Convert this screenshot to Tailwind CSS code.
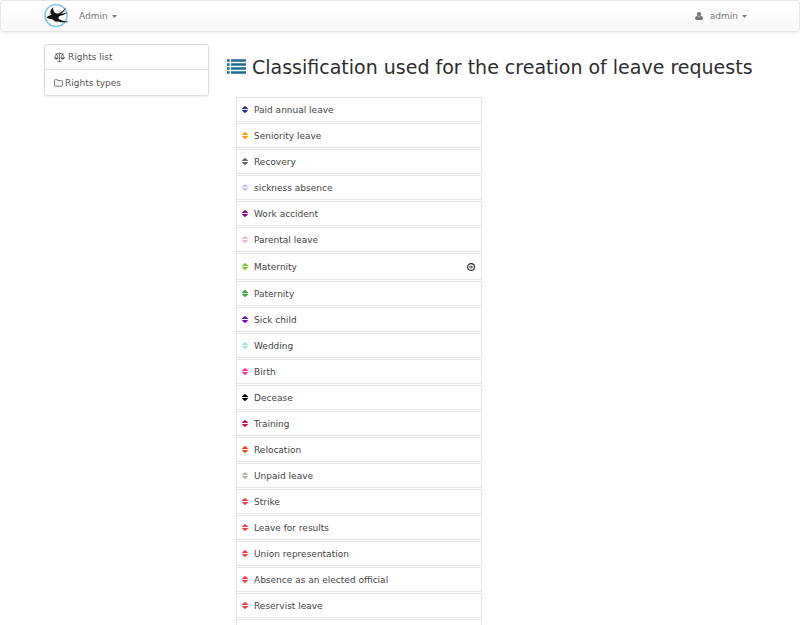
<!DOCTYPE html>
<html lang="en">
<head>
<meta charset="utf-8">
<meta name="viewport" content="width=device-width, initial-scale=1">
<title>Rights classification</title>
<script src="https://cdn.jsdelivr.net/npm/@tailwindcss/browser@4"></script>
</head>
<body class="bg-white font-['DejaVu_Sans',sans-serif] text-[9px] leading-3 text-[#444]">
<svg class="hidden" aria-hidden="true">
  <symbol id="sort" viewBox="0 0 6 8"><path fill="currentColor" d="M3 0Q3.300 0 3.500 .2L5.800 2.300Q6.200 3 5.500 3H.5Q-.2 3 .2 2.300L2.500 .2Q2.700 0 3 0ZM.5 4H5.500Q6.200 4 5.800 4.700L3.500 6.800Q3 7.200 2.500 6.800L.2 4.700Q-.2 4 .5 4Z"/></symbol>
</svg>
<header class="h-8 rounded-[3px] border border-[#e7e7e7] bg-gradient-to-b from-white to-[#f8f8f8] shadow-[0_1px_3px_rgba(0,0,0,0.08)]">
  <nav class="flex h-full items-center justify-between pr-[52px] pl-[43px] text-[#777]">
    <div class="flex items-center">
      <a href="#" aria-label="Home">
        <svg class="h-[26px] w-[26px]" viewBox="0 0 26 26">
          <circle cx="12" cy="12.500" r="11" fill="#fff" stroke="#87c5e6" stroke-width="1.600"/>
          <path fill="#151515" d="M2.500 15Q3.500 12.600 6 12.200L7.500 12Q4.500 8 9 4.200Q8.500 8.500 12.500 10.600L14.500 10.500Q19 8.500 22 4.500Q21 8 17 11L24 9.300Q20 12.400 15.500 12.900L14.200 15Q16.500 18.300 25 18.800Q19.500 20 14 18.400Q11 19.700 8.800 16.500L5 15.800Q3.500 14.700 2.500 15Z"/>
        </svg>
      </a>
      <button type="button" class="ml-[9px] flex items-center gap-1">Admin
        <svg class="h-[3px] w-[5px]" viewBox="0 0 6 3" preserveAspectRatio="none"><path fill="currentColor" d="M0 0H6L3 3Z"/></svg>
      </button>
    </div>
    <button type="button" class="flex items-center">
      <svg class="mr-[7px] h-2 w-2" viewBox="0 0 8 8"><path fill="currentColor" d="M4 0A2.100 2.100 0 0 1 6.100 2.100A2.100 2.100 0 0 1 4 4.300A2.100 2.100 0 0 1 1.900 2.100A2.100 2.100 0 0 1 4 0ZM2 3.700Q4 5.400 6 3.700Q8 4 8 6.600Q8 8 6.500 8H1.500Q0 8 0 6.600Q0 4 2 3.700Z"/></svg>
      admin
      <svg class="ml-1 h-[3px] w-[5px]" viewBox="0 0 6 3" preserveAspectRatio="none"><path fill="currentColor" d="M0 0H6L3 3Z"/></svg>
    </button>
  </nav>
</header>
<div class="flex items-start pt-3 pl-[44px]">
  <aside class="w-[165px] shrink-0 rounded-[3px] border border-[#ddd] shadow-[0_1px_2px_rgba(0,0,0,0.08)]">
    <a href="#" class="flex h-6 items-center gap-[3px] px-[9px] text-[#555]">
      <svg class="h-[10px] w-[11px]" viewBox="0 0 11 10" fill="none" stroke="currentColor" stroke-width=".8"><path d="M1.500 1.700H9.500M5.500 .5V9.300M3.300 9.400H7.700M2.400 2L.6 6H4.200ZM8.600 2L6.800 6H10.400Z"/><path fill="currentColor" d="M.5 6H4.300Q3.700 7.500 2.400 7.500T.5 6ZM6.700 6H10.500Q9.900 7.500 8.600 7.500T6.700 6Z" stroke="none"/></svg>
      Rights list</a>
    <a href="#" class="flex h-[26px] items-center gap-[2px] border-t border-[#ddd] px-[9px] text-[#555]">
      <svg class="h-2 w-[9px]" viewBox="0 0 9 8" fill="none" stroke="currentColor" stroke-width=".8"><path d="M.5 6.300V1.500Q.5 .6 1.400 .6H3Q3.800 .6 3.800 1.600H7.500Q8.400 1.600 8.400 2.500V6.300Q8.400 7.200 7.500 7.200H1.400Q.5 7.200 .5 6.300Z"/></svg>
      Rights types</a>
  </aside>
  <main class="min-w-0 grow pl-[18px]">
    <h1 class="mt-[11px] flex h-6 items-center gap-[6px] text-[19px] leading-6 whitespace-nowrap text-[#2d2d2d]">
      <svg class="h-4 w-[19px] shrink-0" viewBox="0 0 19 16" fill="#216a8e"><path d="M0 .3H2.700V2.800H0ZM4 .3H19V2.800H4ZM0 4.300H2.700V6.800H0ZM4 4.300H19V6.800H4ZM0 8.300H2.700V10.800H0ZM4 8.300H19V10.800H4ZM0 12.300H2.700V14.800H0ZM4 12.300H19V14.800H4Z"/></svg>
      Classification used for the creation of leave requests
    </h1>
    <ul id="rights" class="mt-[18px] ml-[9px] flex w-[246px] flex-col gap-px"></ul>
  </main>
</div>
<template id="row">
  <li class="flex h-[25px] items-center border border-[#e4e4e4] pr-[6px] pl-[5px]">
    <svg class="mr-[6px] h-2 w-[6px] shrink-0"><use href="#sort"/></svg><span class="grow">&nbsp;</span>
  </li>
</template>
<template id="move">
  <button type="button" aria-label="Open" class="text-[#222]"><svg class="h-2 w-2" viewBox="0 0 8 8" fill="none" stroke="currentColor"><circle cx="4" cy="4" r="3.400" stroke-width="1.100"/><path d="M2 4H5M4 2.500L5.500 4L4 5.500" stroke-width=".9"/></svg></button>
</template>
<script>
const rights = [
  ['Paid annual leave', '#2730a8'], ['Seniority leave', '#ff9c0a'], ['Recovery', '#666666'],
  ['sickness absence', '#c3c8ee'], ['Work accident', '#9400a8'], ['Parental leave', '#e5b5e8'],
  ['Maternity', '#7fc62e'], ['Paternity', '#36ab40'], ['Sick child', '#7a0db0'],
  ['Wedding', '#9de3e8'], ['Birth', '#ff3d87'], ['Decease', '#000000'],
  ['Training', '#cf0a5c'], ['Relocation', '#f04a16'], ['Unpaid leave', '#b5b5b5'],
  ['Strike', '#ff4040'], ['Leave for results', '#ff4040'], ['Union representation', '#ff4040'],
  ['Absence as an elected official', '#ff4040'], ['Reservist leave', '#ff4040']
];
const list = document.getElementById('rights');
for (const [name, color] of rights) {
  const li = document.getElementById('row').content.cloneNode(true).firstElementChild;
  li.querySelector('span').textContent = name;
  li.querySelector('svg').style.color = color;
  if (name === 'Maternity') {
    li.classList.replace('h-[25px]', 'h-[27px]');
    li.append(document.getElementById('move').content.cloneNode(true));
  }
  list.append(li);
}
const next = document.createElement('li');
next.className = 'h-[6px] border border-b-0 border-[#e4e4e4]';
list.append(next);
</script>
</body>
</html>
